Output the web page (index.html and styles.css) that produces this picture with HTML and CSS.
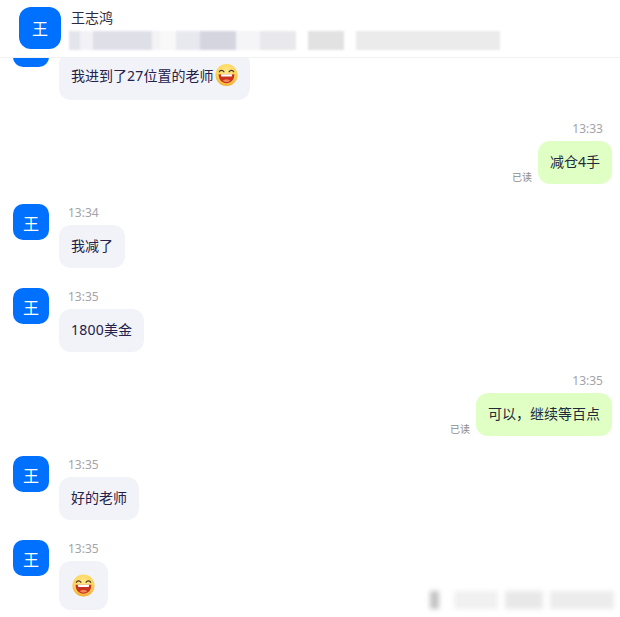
FILE: index.html
```html
<!DOCTYPE html>
<html lang="zh-CN">
<head>
  <meta charset="UTF-8" />
  <title>王志鸿</title>
  <link rel="stylesheet" href="styles.css">
</head>
<body>
  <svg class="defs" width="0" height="0">
    <defs>
      <radialGradient id="face" cx="50%" cy="35%" r="65%">
        <stop offset="0" stop-color="#ffe98a" />
        <stop offset="0.7" stop-color="#fdd35a" />
        <stop offset="1" stop-color="#f0a92e" />
      </radialGradient>
      <symbol id="grin" viewBox="0 0 24 24">
        <circle cx="12" cy="12" r="11.500" fill="url(#face)" />
        <path d="M4.500 8.600c1-2 3.600-2 4.800 0M14.700 8.600c1.200-2 3.800-2 4.800 0" fill="none" stroke="#4a3327" stroke-width="1.300" stroke-linecap="round" />
        <path d="M3.800 11.200h16.400c.2 5.600-3.400 9.400-8.200 9.400s-8.400-3.800-8.200-9.400z" fill="#c8321f" />
        <path d="M6 11.200h12l-.6 2.400H6.600z" fill="#fff" />
        <path d="M8 18c1.800-1.800 6.200-1.800 8 0-2.200 1.900-5.800 1.900-8 0z" fill="#f08a5a" />
      </symbol>
    </defs>
  </svg>

  <div class="page">
    <header class="top">
      <div class="avatar avatar-lg">王</div>
      <div class="top-info">
        <div class="top-name">王志鸿</div>
        <div class="smudge">
          <i class="s1"></i><i class="s2"></i><i class="s3"></i><i class="s4"></i><i class="s5"></i><i class="s6"></i><i class="s7"></i><i class="s8"></i><i class="s9"></i><i class="s10"></i><i class="s11"></i><i class="s12"></i><i class="s13"></i>
        </div>
      </div>
    </header>

    <div class="list">
      <!-- scrolled under the header, only its lower part shows -->
      <div class="msg msg-first">
        <div class="avatar"></div>
        <div class="body">
          <div class="time"></div>
          <div class="bubble">我进到了<span class="num">27</span>位置的老师<svg class="emoji"><use href="#grin" /></svg></div>
        </div>
      </div>

      <div class="msg mine">
        <div class="time">13:33</div>
        <div class="line">
          <span class="read">已读</span>
          <div class="bubble">减仓4手</div>
        </div>
      </div>

      <div class="msg">
        <div class="avatar">王</div>
        <div class="body">
          <div class="time">13:34</div>
          <div class="bubble">我减了</div>
        </div>
      </div>

      <div class="msg">
        <div class="avatar">王</div>
        <div class="body">
          <div class="time">13:35</div>
          <div class="bubble"><span class="num">1800</span>美金</div>
        </div>
      </div>

      <div class="msg mine">
        <div class="time">13:35</div>
        <div class="line">
          <span class="read">已读</span>
          <div class="bubble">可以，继续等百点</div>
        </div>
      </div>

      <div class="msg">
        <div class="avatar">王</div>
        <div class="body">
          <div class="time">13:35</div>
          <div class="bubble">好的老师</div>
        </div>
      </div>

      <div class="msg">
        <div class="avatar">王</div>
        <div class="body">
          <div class="time">13:35</div>
          <div class="bubble bubble-emoji"><svg class="emoji-lg"><use href="#grin" /></svg></div>
        </div>
      </div>
    </div>

    <!-- watermark, bottom right -->
    <div class="mark">
      <i class="m1"></i><i class="m2"></i><i class="m3"></i><i class="m4"></i>
    </div>
  </div>
</body>
</html>
```

FILE: styles.css
```css
html, body {
  margin: 0;
  padding: 0;
  background: #fff;
  font-family: 'Noto Sans', 'Noto Sans CJK SC', sans-serif;
}

.defs {
  display: block;
  height: 0;
}

.page {
  position: relative;
  width: 620px;
  height: 617px;
  overflow: hidden;
}

/* header */
.top {
  display: flex;
  gap: 8px;
  height: 58px;
  padding: 7px 0 0 19px;
  box-sizing: border-box;
  border-bottom: 1px solid #f1f1f3;
  background: #fff;
}

.top-info {
  display: flex;
  flex-direction: column;
}

.top-name {
  margin: 1px 0 0 2px;
  font-size: 14px;
  line-height: 20px;
  color: #2b2b45;
}

.smudge {
  display: flex;
  height: 19px;
  margin-top: 3px;
  filter: blur(1px);
}

.smudge i {
  display: block;
  height: 100%;
}

.s1 { width: 11px; background: #e4e4ec; }
.s2 { width: 13px; background: #f2f2f6; }
.s3 { width: 59px; background: #dfdfe8; }
.s4 { width: 8px; background: #f3f3f6; }
.s5 { width: 16px; background: #f8f8f9; }
.s6 { width: 24px; background: #e8e8ef; }
.s7 { width: 36px; background: #d5d5e0; }
.s8 { width: 24px; background: #f5f5f8; }
.s9 { width: 36px; background: #e9e9ed; }
.s10 { width: 12px; background: #fff; }
.s11 { width: 36px; background: #e2e2e2; }
.s12 { width: 12px; background: #fff; }
.s13 { width: 144px; background: #ebebeb; }

.avatar {
  flex: none;
  display: flex;
  align-items: center;
  justify-content: center;
  box-sizing: border-box;
  width: 36px;
  height: 36px;
  margin-top: 1px;
  padding-top: 1px;
  border-radius: 10px;
  background: #0070ff;
  color: #fff;
  font-size: 16px;
}

.avatar-lg {
  width: 42px;
  height: 42px;
  margin-top: 0;
  padding-top: 0;
  border-radius: 12px;
}

/* messages */
.list {
  display: flex;
  flex-direction: column;
  gap: 19px;
  height: 559px;
  overflow: hidden;
}

.msg {
  display: flex;
  flex: none;
  gap: 10px;
  padding: 0 8px 0 13px;
}

.msg-first {
  margin-top: -28px;
}

.body {
  display: flex;
  flex-direction: column;
  align-items: flex-start;
}

.time {
  height: 22px;
  margin-left: 9px;
  font-size: 12px;
  line-height: 19px;
  color: #a3a3a8;
}

.bubble {
  display: flex;
  align-items: center;
  padding: 10px 12px 12px;
  border-radius: 12px;
  background: #f2f3f8;
  color: #24214a;
  font-size: 14px;
  line-height: 21px;
}

.num {
  letter-spacing: 0.25px;
}

.bubble-emoji {
  padding: 13px;
}

.emoji {
  display: block;
  width: 23px;
  height: 26px;
  margin-left: 1px;
}

.emoji-lg {
  display: block;
  width: 23px;
  height: 23px;
}

.mine {
  flex-direction: column;
  align-items: flex-end;
  gap: 0;
}

.mine .time {
  margin: 0 9px 0 0;
}

.line {
  display: flex;
  align-items: flex-end;
  gap: 6px;
}

.mine .bubble {
  background: #dfffc4;
  color: #1f2a3a;
}

.read {
  margin-bottom: 0;
  font-size: 10px;
  line-height: 14px;
  color: #8e8e8e;
}

/* watermark */
.mark {
  position: absolute;
  left: 430px;
  top: 591px;
  display: flex;
  gap: 7px;
  width: 184px;
  height: 18px;
  filter: blur(2.5px);
}

.mark i {
  display: block;
  height: 100%;
}

.m1 { width: 9px; margin-right: 8px; background: #c4c4c4; }
.m2 { width: 46px; background: #f0f0f0; }
.m3 { width: 40px; background: #e8e8e8; }
.m4 { width: 67px; background: #ececec; }
```
